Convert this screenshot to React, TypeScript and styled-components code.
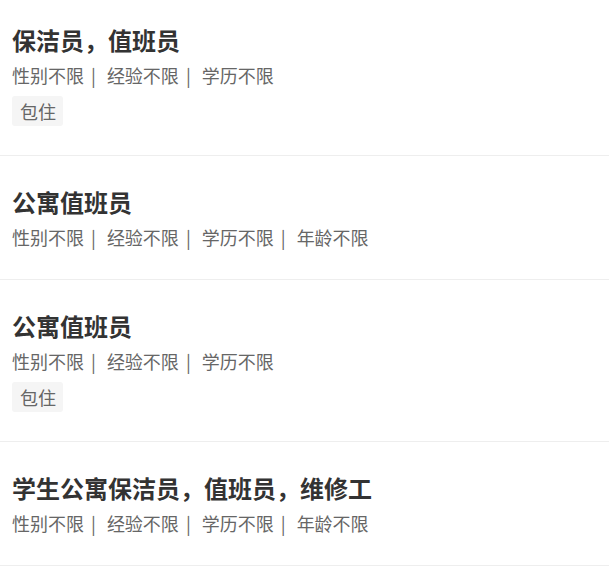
import * as React from 'react';
import styled, { createGlobalStyle } from 'styled-components';

const GlobalStyle = createGlobalStyle`
  html, body {
    margin: 0;
    padding: 0;
    background: #fff;
  }
  body {
    font-family: "Noto Sans CJK SC", "Noto Sans", sans-serif;
  }
`;

const List = styled.div`
  width: 609px;
`;

const Item = styled.div`
  padding: 29px 12px 29px;
  border-bottom: 1px solid #eeeeee;

  &:first-child {
    padding-top: 23px;
  }
`;

const Title = styled.div`
  font-size: 24px;
  line-height: 34px;
  font-weight: 700;
  color: #333333;
`;

const Meta = styled.div`
  margin-top: 5px;
  font-size: 18px;
  line-height: 26px;
  color: #666666;
  white-space: nowrap;
`;

const Sep = styled.span`
  display: inline-block;
  margin: 0 11px 0 7px;
  color: #666666;
`;

const Tags = styled.div`
  display: flex;
  gap: 8px;
  margin-top: 8px;
`;

const Tag = styled.span`
  display: inline-block;
  height: 30px;
  line-height: 30px;
  padding: 0 7px 0 8px;
  font-size: 18px;
  color: #666666;
  background: #f5f5f5;
  border-radius: 3px;
`;

interface Job {
  title: string;
  reqs: string[];
  tags: string[];
}

const jobs: Job[] = [
  {
    title: '保洁员，值班员',
    reqs: ['性别不限', '经验不限', '学历不限'],
    tags: ['包住']
  },
  {
    title: '公寓值班员',
    reqs: ['性别不限', '经验不限', '学历不限', '年龄不限'],
    tags: []
  },
  {
    title: '公寓值班员',
    reqs: ['性别不限', '经验不限', '学历不限'],
    tags: ['包住']
  },
  {
    title: '学生公寓保洁员，值班员，维修工',
    reqs: ['性别不限', '经验不限', '学历不限', '年龄不限'],
    tags: []
  }
];

export default function App() {
  return (
    <>
      <GlobalStyle />
      <List>
        {jobs.map((job, i) => (
          <Item key={`_job_${i}`}>
            <Title>{job.title}</Title>
            <Meta>
              {job.reqs.map((r, j) => (
                <React.Fragment key={`_req_${j}`}>
                  {r}
                  {j < job.reqs.length - 1 && <Sep>|</Sep>}
                </React.Fragment>
              ))}
            </Meta>
            {job.tags.length > 0 && (
              <Tags>
                {job.tags.map((t, k) => (
                  <Tag key={`_tag_${k}`}>{t}</Tag>
                ))}
              </Tags>
            )}
          </Item>
        ))}
      </List>
    </>
  );
}
